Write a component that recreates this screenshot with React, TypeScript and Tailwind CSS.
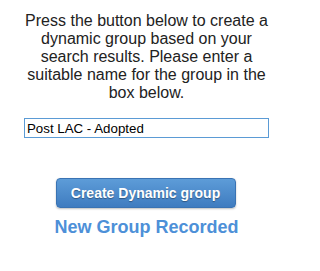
import { useState } from 'react';

export default function App() {
  const [groupName, setGroupName] = useState('Post LAC - Adopted');

  return (
    <div className="w-[318px] h-[271px] bg-white font-['Liberation_Sans',Arial,sans-serif]">
      <div className="ml-[24px] w-[245px] pt-[12px] flex flex-col items-center">
        {/* Instructions */}
        <p className="text-[16px] leading-[18px] text-[#222] text-center w-[250px]">
          Press the button below to create a dynamic group based on your search results. Please enter a
          suitable name for the group in the box below.
        </p>

        {/* Group name */}
        <input
          type="text"
          value={groupName}
          onChange={(e) => setGroupName(e.target.value)}
          className="mt-[16px] w-[245px] h-[20px] border border-[#5b9bd5] px-[2px] text-[13.3px] text-black outline-none"
        />

        {/* Submit */}
        <button
          type="button"
          className="mt-[40px] ml-[-2px] w-[180px] h-[30px] rounded-[4px] border border-[#3a73b3] bg-gradient-to-b from-[#5d9cd8] to-[#3f7cc0] text-white text-[14px] font-bold [text-shadow:0_1px_1px_rgba(0,0,0,0.35)] shadow-[0_1px_2px_rgba(0,0,0,0.25)]"
        >
          Create Dynamic group
        </button>

        <div className="mt-[9px] text-[18px] leading-[21px] font-bold text-[#4d90d8]">New Group Recorded</div>
      </div>
    </div>
  );
}
